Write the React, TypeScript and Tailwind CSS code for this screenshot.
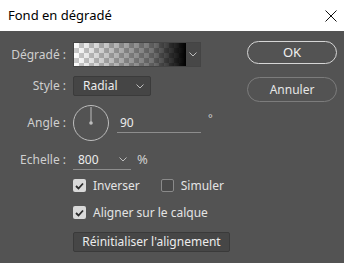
import React from "react";

function Chevron({ className = "" }: { className?: string }) {
  return (
    <svg width="8" height="5" viewBox="0 0 8 5" className={className}>
      <polyline points="0.5,0.5 4,4 7.5,0.5" fill="none" stroke="#bdbdbd" strokeWidth="1" />
    </svg>
  );
}

function Check({ on }: { on: boolean }) {
  return on ? (
    <div className="w-[13px] h-[13px] rounded-[2px] bg-[#d9d9d9] flex items-center justify-center">
      <svg width="9" height="8" viewBox="0 0 9 8">
        <polyline points="1,4 3.5,6.5 8,1.5" fill="none" stroke="#2b2b2b" strokeWidth="1.8" />
      </svg>
    </div>
  ) : (
    <div className="w-[13px] h-[13px] rounded-[2px] border border-[#8a8a8a] bg-[#4a4a4a]" />
  );
}

export default function App() {
  const label = "w-[68px] shrink-0 text-right pr-[2px] text-[#cfcfcf]";
  return (
    <div className="w-[344px] h-[263px] bg-[#535353] text-[12px] font-['Noto_Sans',sans-serif] overflow-hidden">
      <div className="h-[31px] bg-white flex items-center justify-between pl-[8px] pr-[7px]">
        <span className="text-[13px] text-black">Fond en dégradé</span>
        <svg width="12" height="12" viewBox="0 0 12 12">
          <path d="M0.5 0.5 L11.5 11.5 M11.5 0.5 L0.5 11.5" stroke="#111" strokeWidth="1" />
        </svg>
      </div>
      <div className="flex">
        <div className="w-[247px] shrink-0 flex flex-col">
          {/* Dégradé */}
          <div className="flex items-center gap-[5px] mt-[11px] h-[25px]">
            <span className={label}>Dégradé :</span>
            <div className="flex h-[25px] border border-[#444]">
              <div className="relative w-[112px] h-full bg-[conic-gradient(#cbcbcb_25%,#ffffff_0_50%,#cbcbcb_0_75%,#ffffff_0)] bg-[length:10px_10px]">
                <div className="absolute inset-0 bg-[linear-gradient(to_right,rgba(0,0,0,0)_0%,rgba(0,0,0,0.55)_70%,#000_100%)]" />
              </div>
              <div className="w-[14px] h-full bg-[#474747] flex items-center justify-center">
                <Chevron />
              </div>
            </div>
          </div>
          {/* Style */}
          <div className="flex items-center gap-[5px] mt-[9px] h-[20px]">
            <span className={label}>Style :</span>
            <div className="w-[78px] h-[20px] bg-[#454545] border border-[#3b3b3b] rounded-[2px] flex items-center justify-between pl-[9px] pr-[6px] text-[#ececec]">
              <span>Radial</span>
              <Chevron />
            </div>
          </div>
          {/* Angle */}
          <div className="flex items-center gap-[5px] mt-[9px] h-[36px]">
            <span className={label}>Angle :</span>
            <svg width="36" height="36" viewBox="0 0 36 36">
              <circle cx="18" cy="18" r="17.5" fill="none" stroke="#bdbdbd" strokeWidth="1" />
              <line x1="18" y1="2" x2="18" y2="18" stroke="#bdbdbd" strokeWidth="1" />
              <circle cx="18" cy="18" r="1.8" fill="#bdbdbd" />
            </svg>
            <div className="ml-[3px] w-[84px] h-[19px] border-b border-[#8d8d8d] pl-[3px] text-[#ececec] leading-[18px]">90</div>
            <span className="ml-[2px] -mt-[10px] text-[#cfcfcf] text-[11px]">°</span>
          </div>
          {/* Echelle */}
          <div className="flex items-center gap-[5px] mt-[9px] h-[20px]">
            <span className={label}>Echelle :</span>
            <div className="w-[58px] h-[20px] border-b border-[#8d8d8d] flex items-center justify-between pl-[5px] pr-[4px] text-[#ececec]">
              <span>800</span>
              <Chevron />
            </div>
            <span className="ml-[1px] text-[#cfcfcf] text-[13px]">%</span>
          </div>
          {/* Checkboxes */}
          <div className="ml-[73px] mt-[9px] h-[13px] flex items-center text-[#e4e4e4]">
            <Check on />
            <span className="ml-[7px]">Inverser</span>
            <div className="ml-[21px]"><Check on={false} /></div>
            <span className="ml-[7px]">Simuler</span>
          </div>
          <div className="ml-[73px] mt-[14px] h-[13px] flex items-center text-[#e4e4e4]">
            <Check on />
            <span className="ml-[7px]">Aligner sur le calque</span>
          </div>
          <div className="ml-[73px] mt-[13px] w-[157px] h-[20px] bg-[#464646] border border-[#3a3a3a] rounded-[2px] flex items-center justify-center text-[#ececec]">
            Réinitialiser l'alignement
          </div>
        </div>
        <div className="flex flex-col">
          <div className="mt-[10px] w-[90px] h-[23px] rounded-full border-[1.5px] border-[#d6d6d6] flex items-center justify-center text-[#f0f0f0] text-[13px]">OK</div>
          <div className="mt-[13px] w-[90px] h-[25px] rounded-full border border-[#7c7c7c] flex items-center justify-center text-[#e6e6e6] text-[12px]">Annuler</div>
        </div>
      </div>
    </div>
  );
}
